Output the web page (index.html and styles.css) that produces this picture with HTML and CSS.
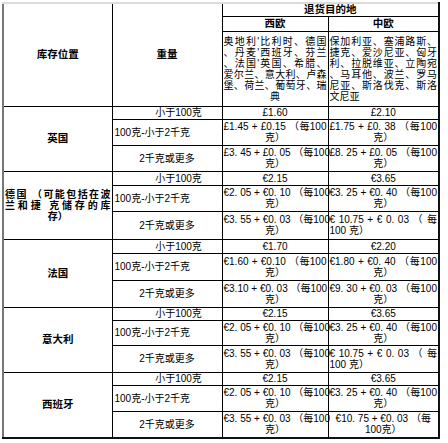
FILE: index.html
```html
<!DOCTYPE html>
<html lang="zh">
<head>
<meta charset="utf-8">
<title>退货费用</title>
<link rel="stylesheet" href="styles.css">
</head>
<body>
<div class="wrap">
<table class="rates">
<colgroup><col class="c1"><col class="c2"><col class="c3"><col class="c4"></colgroup>
<tbody>
<tr class="r13"><th rowspan="3" class="hd">库存位置</th><th rowspan="3" class="hd">重量</th><th colspan="2" class="hd">退货目的地</th></tr>
<tr class="r15"><th class="hd">西欧</th><th class="hd">中欧</th></tr>
<tr class="r75">
<td class="lst"><span class="j">奥地利'比利时、德国</span><span class="j">、丹麦'西班牙、芬兰</span><span class="j">、法国'英国、希腊、</span><span class="j">爱尔兰、意大利、卢森</span><span class="j">堡、荷兰、葡萄牙、瑞</span><span class="c">典</span></td>
<td class="lst"><span class="j">保加利亚、塞浦路斯、</span><span class="j">捷克、爱沙尼亚、匈牙</span><span class="j">利、拉脱维亚、立陶宛</span><span class="j">、马耳他、波兰、罗马</span><span class="j">尼亚、斯洛伐克、斯洛</span><span class="l">文尼亚</span></td>
</tr>

<tr class="r13"><td rowspan="3" class="loc">英国</td><td class="w1">小于100克</td><td class="pr">£1.60</td><td class="pr">£2.10</td></tr>
<tr class="r26"><td class="w2">100克-小于2千克</td><td class="pr"><span class="j">£1.45 + £0.15 （每100</span><span class="c">克）</span></td><td class="pr"><span class="j">£1.75 + £0. 38 （每100</span><span class="c">克）</span></td></tr>
<tr class="r26"><td class="w3">2千克或更多</td><td class="pr"><span class="j">£3. 45 + £0. 05 （每100</span><span class="c">克）</span></td><td class="pr"><span class="j">£8. 25 + £0. 05 （每100</span><span class="c">克）</span></td></tr>

<tr class="r14"><td rowspan="3" class="loc"><span class="j">德国 （可能包括在波</span><span class="j">兰和捷 克储存的库</span><span class="c">存）</span></td><td class="w1">小于100克</td><td class="pr">€2.15</td><td class="pr">€3.65</td></tr>
<tr class="r26"><td class="w2">100克-小于2千克</td><td class="pr"><span class="j">€2. 05 + €0. 10 （每100</span><span class="c">克）</span></td><td class="pr"><span class="j">€3. 25 + €0. 40 （每100</span><span class="c">克）</span></td></tr>
<tr class="r28"><td class="w3">2千克或更多</td><td class="pr"><span class="j">€3. 55 + €0. 03 （每100</span><span class="c">克）</span></td><td class="pr"><span class="j">€ 10.75 + € 0. 03 （ 每</span><span class="l">100 克）</span></td></tr>

<tr class="r14"><td rowspan="3" class="loc">法国</td><td class="w1">小于100克</td><td class="pr">€1.70</td><td class="pr">€2.20</td></tr>
<tr class="r27"><td class="w2">100克-小于2千克</td><td class="pr"><span class="j">€1.60 + €0.10 （每100</span><span class="c">克）</span></td><td class="pr"><span class="j">€1.80 + €0. 40 （每100</span><span class="c">克）</span></td></tr>
<tr class="r27"><td class="w3">2千克或更多</td><td class="pr"><span class="j">€3.10 + €0. 03 （每100</span><span class="c">克）</span></td><td class="pr"><span class="j">€9. 30 + €0. 03 （每100</span><span class="c">克）</span></td></tr>

<tr class="r13"><td rowspan="3" class="loc">意大利</td><td class="w1">小于100克</td><td class="pr">€2.15</td><td class="pr">€3.65</td></tr>
<tr class="r25"><td class="w2">100克-小于2千克</td><td class="pr"><span class="j">€2. 05 + €0. 10 （每100</span><span class="c">克）</span></td><td class="pr"><span class="j">€3. 25 + €0. 40 （每100</span><span class="c">克）</span></td></tr>
<tr class="r27"><td class="w3">2千克或更多</td><td class="pr"><span class="j">€3. 55 + €0. 03 （每100</span><span class="c">克）</span></td><td class="pr"><span class="j">€ 10.75 + € 0. 03 （ 每</span><span class="l">100 克）</span></td></tr>

<tr class="r13"><td rowspan="3" class="loc">西班牙</td><td class="w1">小于100克</td><td class="pr">€2.15</td><td class="pr">€3.65</td></tr>
<tr class="r26"><td class="w2">100克-小于2千克</td><td class="pr"><span class="j">€2. 05 + €0. 10 （每100</span><span class="c">克）</span></td><td class="pr"><span class="j">€3. 25 + €0. 40 （每100</span><span class="c">克）</span></td></tr>
<tr class="r27"><td class="w3">2千克或更多</td><td class="pr"><span class="j">€3. 55 + €0. 03 （每100</span><span class="c">克）</span></td><td class="pr"><span class="c">€10. 75 + €0. 03 （每</span><span class="c">100克）</span></td></tr>
</tbody>
</table>
</div>
</body>
</html>
```

FILE: styles.css
```css
html, body {
  margin: 0;
  padding: 0;
  background: #fff;
}
body {
  font-family: "Liberation Sans", "Noto Sans CJK SC", sans-serif;
  font-size: 10px;
  line-height: 11px;
  color: #000;
}
.wrap {
  padding: 2px 0 0 2px;
}
.rates {
  border-collapse: collapse;
  table-layout: fixed;
  width: 436px;
  border-top: 2px solid #dcdcdc;
  border-left: 2px solid #777;
  border-right: 2px solid #111;
  border-bottom: 2px solid #111;
}
.c1 { width: 109px; }
.c2 { width: 110px; }
.c3 { width: 106px; }
.c4 { width: 111px; }
.rates th,
.rates td {
  border: 1px solid #000;
  padding: 0 1px;
  vertical-align: middle;
  text-align: center;
  font-weight: normal;
  white-space: nowrap;
}
.rates .hd {
  font-weight: 700;
  font-size: 10.5px;
}
.r13 { height: 13px; }
.r14 { height: 14px; }
.r15 { height: 15px; }
.r25 { height: 25px; }
.r26 { height: 26px; }
.r27 { height: 27px; }
.r28 { height: 28px; }
.r75 { height: 75px; }
.j, .c, .l {
  display: block;
  white-space: nowrap;
}
.j {
  text-align: justify;
  text-align-last: justify;
}
.c { text-align: center; }
.l { text-align: left; }
.rates .loc {
  font-weight: 700;
  font-size: 10.5px;
}
.rates .loc .j,
.rates .loc .c {
  font-size: 10px;
}
.rates .w1 {
  padding-left: 24px;
}
.rates .w2 {
  text-align: left;
  padding-left: 2px;
}
```
